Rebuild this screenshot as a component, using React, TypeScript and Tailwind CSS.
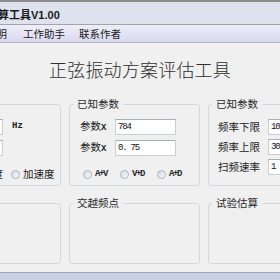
import * as React from "react";

const mono = "font-['Liberation_Mono',monospace]";

function Group({
  title,
  className,
  children,
}: React.PropsWithChildren<{ title?: string; className?: string }>) {
  return (
    <fieldset className={`shrink-0 rounded-[3px] border border-[#d3d8de] ${className ?? ""}`}>
      {title ? (
        <legend className="ml-[3px] px-[4px] text-[10.5px] leading-[14px] text-[#2a2a2a]">{title}</legend>
      ) : null}
      {children}
    </fieldset>
  );
}

function TextBox({ value, className }: { value: string; className?: string }) {
  return (
    <input
      readOnly
      value={value}
      className={`h-[16px] shrink-0 border border-[#c9cdd4] border-t-[#a9adb4] bg-white pl-[2px] text-[9px] tracking-[-1.2px] text-[#111] outline-none ${mono} ${className ?? ""}`}
    />
  );
}

function Radio({ label, className, textClass }: { label: string; className?: string; textClass?: string }) {
  return (
    <div className={`flex h-[12px] items-center gap-[3px] ${className ?? ""}`}>
      <span className="h-[9px] w-[9px] shrink-0 rounded-full border border-[#a9b3be] bg-linear-to-br from-[#d5dce4] to-[#f8f9fb]" />
      <span className={textClass ?? "text-[10.5px] leading-[12px] text-[#222]"}>{label}</span>
    </div>
  );
}

function Field({ label, value, labelWidth }: { label: React.ReactNode; value: string; labelWidth: string }) {
  return (
    <div className="flex h-[16px] items-center">
      <span className={`${labelWidth} shrink-0 text-[10.5px] leading-[16px] text-[#222]`}>{label}</span>
      <TextBox value={value} className="w-[61px]" />
    </div>
  );
}

const paramX = (
  <>
    参数<span className={`text-[9px] font-bold ${mono}`}>X</span>
  </>
);

export default function App() {
  return (
    <div className="h-[280px] w-[280px] overflow-hidden bg-[#f0f0f0] font-['Noto_Sans_CJK_SC',sans-serif] text-[#1e1e1e]">
      {/* window title */}
      <div className="h-[25px] border-t-2 border-b border-t-[#8c8c8c] border-b-[#a4a4a4] bg-[#dde2ee]">
        <div className="-ml-[13px] whitespace-nowrap pt-[1px] text-[11px] font-bold leading-[22px] text-[#1a1a1a]">
          计算工具<span className="font-['Liberation_Sans',sans-serif]">V1.00</span>
        </div>
      </div>

      {/* menu */}
      <div className="flex h-[18px] items-center whitespace-nowrap border-b border-[#b4b4c0] bg-linear-to-b from-[#eeeefa] to-[#d9d9ef] text-[10.5px] leading-[17px] text-[#1a1a1a]">
        <span className="-ml-[14px]">说明</span>
        <span className="ml-[16px]">工作助手</span>
        <span className="ml-[14px]">联系作者</span>
      </div>

      <div className="mt-[14px] whitespace-nowrap text-center text-[18px] font-light leading-[24px] tracking-[0.2px] text-[#2e2e2e]">
        正弦振动方案评估工具
      </div>

      {/* top groups */}
      <div className="-ml-[40px] mt-[16px] flex items-start gap-2">
        <Group className="mt-[7px] h-[82px] w-[101px]">
          <div className="flex flex-col pt-[14px]">
            <div className="flex h-[16px] items-center">
              <TextBox value="" className="ml-[2px] w-[40px]" />
              <span className={`ml-[9px] text-[9px] font-bold ${mono}`}>Hz</span>
            </div>
            <div className="mt-[5px] flex h-[16px] items-center">
              <TextBox value="" className="ml-[2px] w-[40px]" />
            </div>
            <div className="mt-[12px] flex items-center">
              <Radio label="速度" className="ml-[9px]" />
              <Radio label="加速度" className="ml-[8px]" />
            </div>
          </div>
        </Group>

        <Group title="已知参数" className="h-[89px] w-[131px]">
          <div className="flex flex-col pl-[10px] pt-[8px]">
            <Field label={paramX} value="784" labelWidth="w-[35px]" />
            <div className="mt-[5px]">
              <Field label={paramX} value="0. 75" labelWidth="w-[35px]" />
            </div>
            <div className="ml-[3px] mt-[12px] flex items-center gap-[12px]">
              {["A+V", "V+D", "A+D"].map((r) => (
                <Radio
                  key={r}
                  label={r}
                  textClass={`w-[13px] whitespace-nowrap text-[9px] font-bold leading-[12px] tracking-[-1.4px] text-[#2a2a2a] ${mono}`}
                />
              ))}
            </div>
          </div>
        </Group>

        <Group title="已知参数" className="h-[89px] w-[120px]">
          <div className="flex flex-col gap-[4px] pl-[9px] pt-[8px]">
            <Field label="频率下限" value="10" labelWidth="w-[50px]" />
            <Field label="频率上限" value="30" labelWidth="w-[50px]" />
            <Field label="扫频速率" value="1" labelWidth="w-[50px]" />
          </div>
        </Group>
      </div>

      {/* lower groups */}
      <div className="-ml-[40px] mt-[10px] flex items-start gap-2">
        <Group className="mt-[7px] h-[61px] w-[101px]" />
        <Group title="交越频点" className="h-[68px] w-[131px]" />
        <Group title="试验估算" className="h-[68px] w-[120px]" />
      </div>

      {/* status strip */}
      <div className="mt-[8px] h-[10px] border-t border-[#9ea4ae] bg-[#c9d1e6]" />
    </div>
  );
}
